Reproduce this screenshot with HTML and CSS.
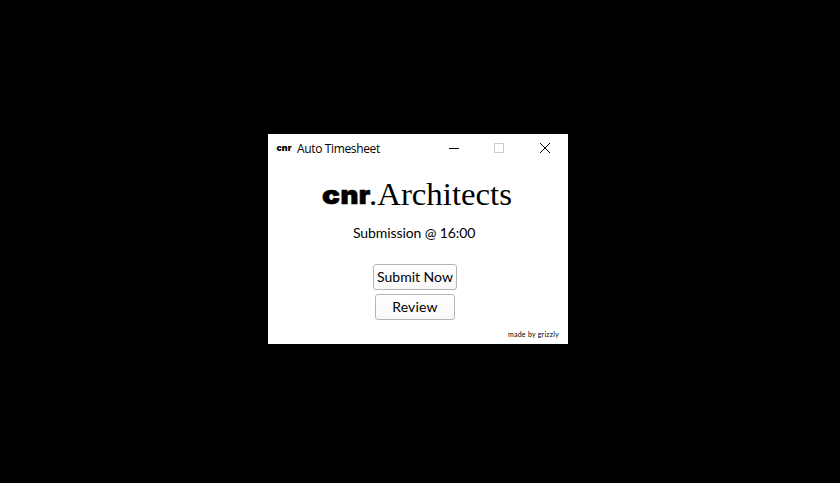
FILE: index.html
```html
<!DOCTYPE html>
<html lang="en">
<head>
<meta charset="utf-8">
<title>Auto Timesheet</title>
<link rel="stylesheet" href="styles.css">
</head>
<body>
<main class="window">
  <header class="titlebar">
    <svg class="app-icon" width="16" height="12" viewBox="0 0 16 12"><text class="brand brand-small" x="0.5" y="8.800" textLength="15" lengthAdjust="spacingAndGlyphs">cnr</text></svg>
    <span class="title">Auto Timesheet</span>
    <svg class="controls" width="102" height="12" viewBox="0 0 102 12" fill="none">
      <path d="M0 6.500h10" stroke="#000"/>
      <path d="M45.500 1.500h9v9h-9z" stroke="#ccc"/>
      <path d="M91 1l10 10M101 1L91 11" stroke="#000" stroke-width="1"/>
    </svg>
  </header>
  <svg class="logo" width="200" height="42" viewBox="0 0 200 42">
    <text class="brand" x="4" y="32" textLength="18" lengthAdjust="spacingAndGlyphs">c</text>
    <text class="brand" x="22.600" y="32" textLength="18" lengthAdjust="spacingAndGlyphs">n</text>
    <text class="brand" x="40.800" y="32" textLength="11.500" lengthAdjust="spacingAndGlyphs">r</text>
    <text class="logo-name" x="51" y="32.500" textLength="143" lengthAdjust="spacingAndGlyphs">.Architects</text>
  </svg>
  <p class="status">Submission @ 16:00</p>
  <button class="btn submit">Submit Now</button>
  <button class="btn review">Review</button>
  <footer class="credit">made by grizzly</footer>
</main>
</body>
</html>
```
FILE: styles.css
```css
* { box-sizing: border-box; }
body {
  margin: 0;
  height: 483px;
  background: #000;
  padding: 134px 0 0 268px;
  overflow: hidden;
}
.window {
  width: 300px;
  height: 210px;
  background: #fff;
  color: #000;
  display: flex;
  flex-direction: column;
  font-family: Lato, sans-serif;
}
.titlebar {
  height: 28px;
  flex: none;
  display: flex;
  align-items: center;
  padding: 0 17px 0 8px;
}
.title {
  margin-left: 5px;
  font: 12px "Open Sans", sans-serif;
  letter-spacing: -0.36px;
  white-space: nowrap;
}
.controls { margin-left: auto; }
.brand {
  font: 900 26px Inter, sans-serif;
  stroke: #000;
  stroke-width: 0.6px;
  stroke-linejoin: round;
}
.brand-small { font-size: 9px; stroke-width: 0; }
.logo { margin: 10px 0 0 50px; flex: none; }
.logo-name { font: 32px "Liberation Serif", serif; }
.status {
  margin: 10px 0 0 85px;
  font-size: 14px;
  line-height: 18px;
  letter-spacing: -0.1px;
}
.btn {
  height: 26px;
  padding: 0;
  border: 1px solid #b5b5b5;
  border-radius: 3px;
  background: linear-gradient(#fff, #f8f8f8);
  color: #000;
  font: 14px/24px Lato, sans-serif;
  white-space: nowrap;
}
.submit { width: 84px; margin: 22px 0 0 105px; }
.review { width: 80px; margin: 4px 0 0 107px; letter-spacing: 0.2px; }
.credit {
  margin: 9px 9px 0 auto;
  font-size: 7px;
  line-height: 10px;
  letter-spacing: 0.26px;
}
```
